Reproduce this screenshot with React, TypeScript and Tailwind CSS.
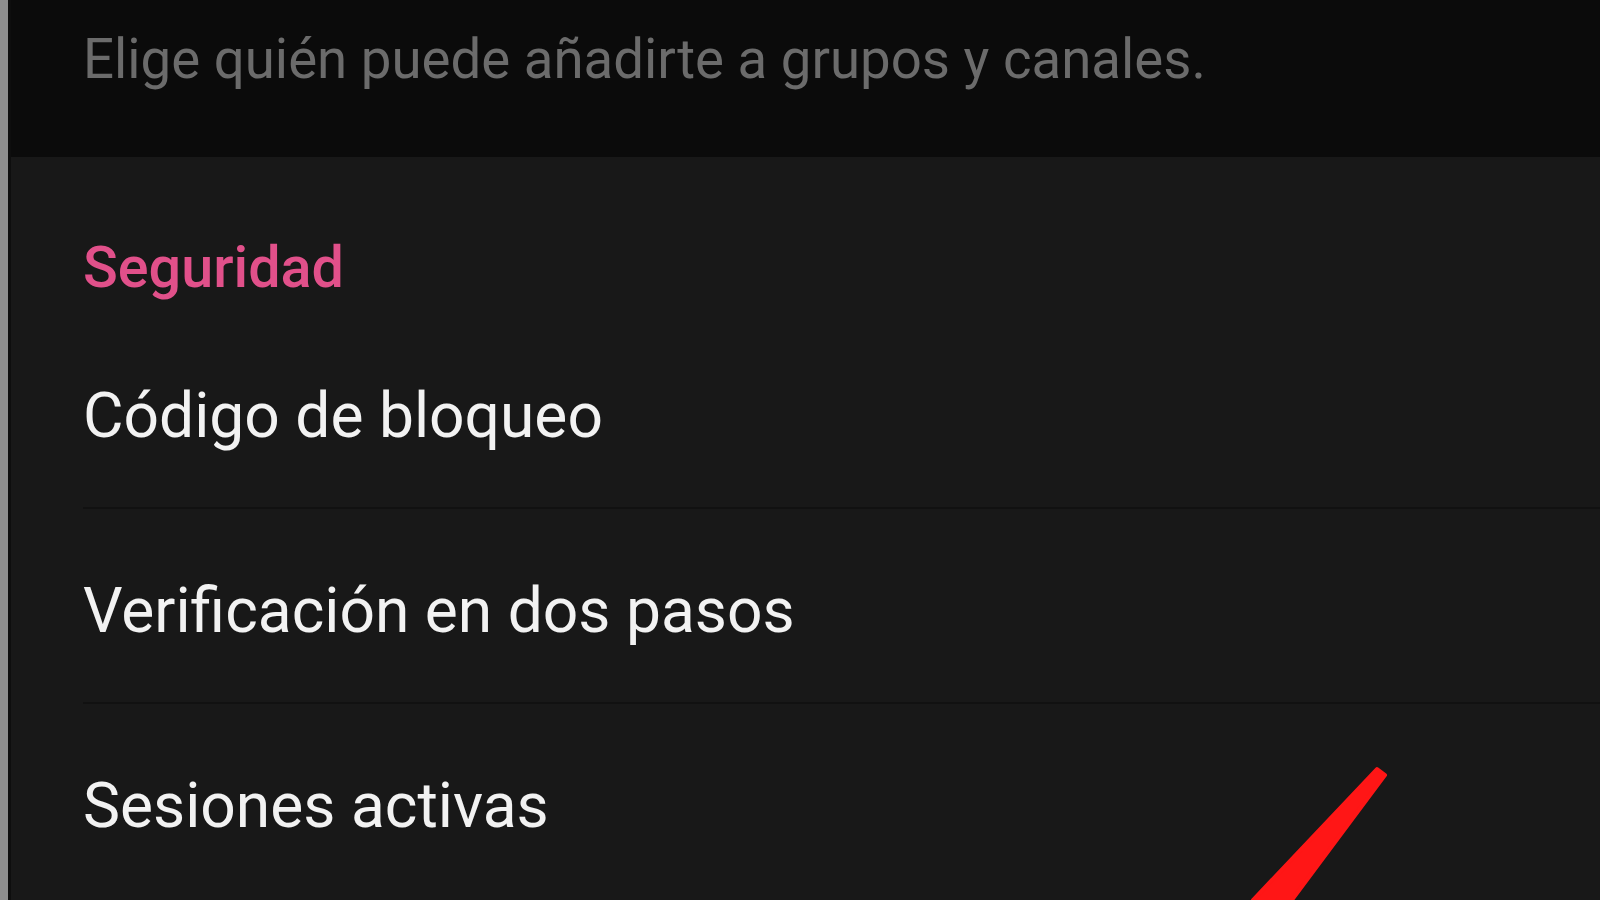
import React from 'react';

const items = ['Código de bloqueo', 'Verificación en dos pasos', 'Sesiones activas'];

export default function App() {
  return (
    <div className="relative flex h-[900px] w-[1600px] overflow-hidden bg-[#181818] font-['Roboto',sans-serif]">
      {/* screenshot edge */}
      <div className="w-[8px] shrink-0 bg-[#8e8e8e]" />
      <div className="w-[3px] shrink-0 bg-[#0e0e0e]" />

      <div className="flex flex-1 flex-col">
        {/* info box */}
        <div className="h-[157px] bg-[#0b0b0b] pl-[72px] pt-[29px]">
          <p className="text-[54.6px] leading-[60px] text-[#6b6b6b]">
            Elige quién puede añadirte a grupos y canales.
          </p>
        </div>

        {/* section header */}
        <div className="pl-[72px] pt-[81px] pb-[16px]">
          <h2 className="text-[57.5px] font-medium leading-[60px] text-[#e1508a]">Seguridad</h2>
        </div>

        {/* rows */}
        <div className="flex flex-col pl-[72px]">
          {items.map((item, i) => (
            <div
              key={item}
              className={`h-[195px] pt-[67px] ${i < items.length - 1 ? 'border-b-2 border-[#111111]' : ''}`}
            >
              <span className="text-[62.3px] leading-[70px] text-[#f2f2f2]">{item}</span>
            </div>
          ))}
        </div>
      </div>

      {/* red annotation arrow */}
      <svg className="pointer-events-none absolute inset-0" width="1600" height="900" viewBox="0 0 1600 900">
        <polygon
          points="1377,769 1385,775 1277,920 1253,900"
          fill="#ff1616"
          stroke="#ff1616"
          strokeWidth="4"
          strokeLinejoin="round"
        />
      </svg>
    </div>
  );
}
